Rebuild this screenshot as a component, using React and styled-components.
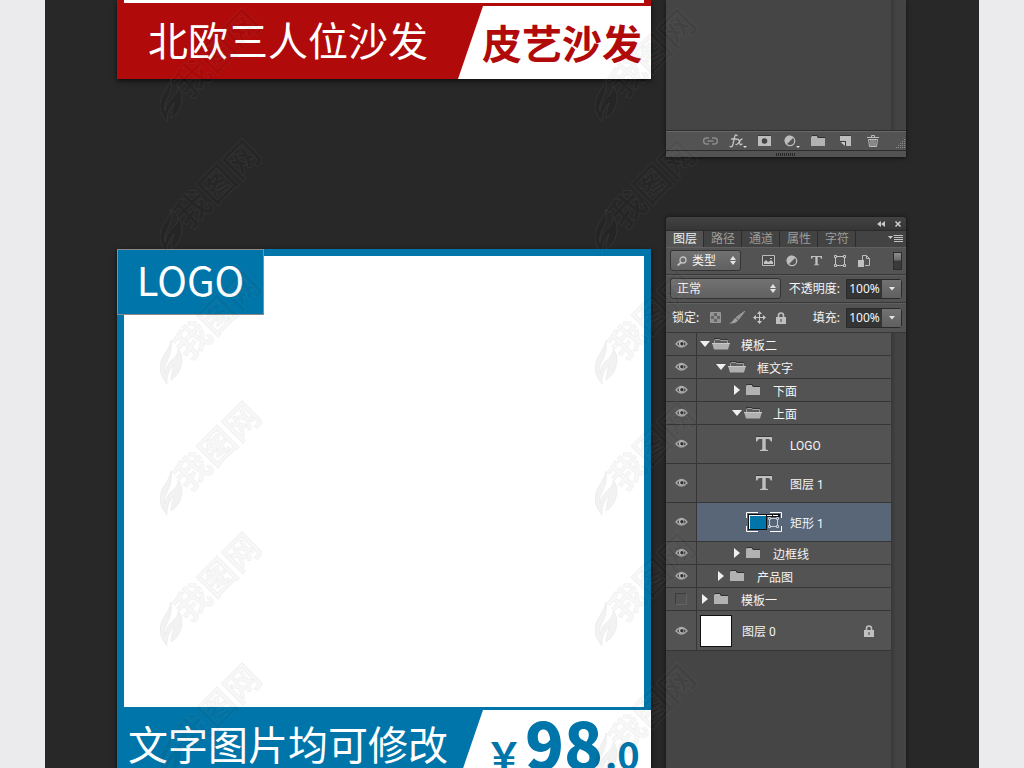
import React, { useState } from "react";
import { createGlobalStyle, styled } from "styled-components";

const LAYERS = [
  { id: 1, kind: "group", level: 0, open: true, name: "模板二", visible: true },
  { id: 2, kind: "group", level: 1, open: true, name: "框文字", visible: true },
  { id: 3, kind: "group", level: 2, open: false, name: "下面", visible: true },
  { id: 4, kind: "group", level: 2, open: true, name: "上面", visible: true },
  { id: 5, kind: "text", name: "LOGO", visible: true },
  { id: 6, kind: "text", name: "图层 1", visible: true },
  { id: 7, kind: "shape", name: "矩形 1", visible: true },
  { id: 8, kind: "group", level: 2, open: false, name: "边框线", visible: true },
  { id: 9, kind: "group", level: 1, open: false, name: "产品图", visible: true },
  { id: 10, kind: "group", level: 0, open: false, name: "模板一", visible: false },
  { id: 11, kind: "background", name: "图层 0", visible: true },
];

const TABS = ["图层", "路径", "通道", "属性", "字符"];

function App() {
  return (
    <>
      <GlobalStyle />
      <St.Page>
        <St.Board>
          <St.Posters>
            <St.Poster $color="#b00a0a">
              <St.Canvas $height="3px" />
              <St.Banner>
                <St.BannerText $indent="31px">北欧三人位沙发</St.BannerText>
                <St.Slant $color="#b00a0a">皮艺沙发</St.Slant>
              </St.Banner>
            </St.Poster>
            <St.Poster $color="#0075a9">
              <St.Logo>LOGO</St.Logo>
              <St.Canvas $height="451px" $top="7px" />
              <St.Banner>
                <St.BannerText $indent="11px">文字图片均可修改</St.BannerText>
                <St.Slant $color="#0075a9">
                  <St.Price>
                    ￥<strong>98</strong>.0
                  </St.Price>
                </St.Slant>
              </St.Banner>
            </St.Poster>
          </St.Posters>
          <St.Panels>
            <PreviousPanel />
            <LayersPanel />
          </St.Panels>
          <St.Watermarks aria-hidden="true">
            {Array.from({ length: 12 }, (_, i) => (
              <Watermark key={i} />
            ))}
          </St.Watermarks>
        </St.Board>
      </St.Page>
    </>
  );
}

export default App;

function PreviousPanel() {
  return (
    <St.ShortPanel>
      <St.ListArea>
        <St.Empty />
        <St.ScrollBar />
      </St.ListArea>
      <St.Footer>
        <St.FooterButton aria-label="link layers">
          <LinkIcon />
        </St.FooterButton>
        <St.FooterButton aria-label="layer style">
          <FxIcon />
        </St.FooterButton>
        <St.FooterButton aria-label="add mask">
          <MaskIcon />
        </St.FooterButton>
        <St.FooterButton aria-label="adjustment layer">
          <AdjustIcon menu />
        </St.FooterButton>
        <St.FooterButton aria-label="new group">
          <FolderIcon />
        </St.FooterButton>
        <St.FooterButton aria-label="new layer">
          <NewLayerIcon />
        </St.FooterButton>
        <St.FooterButton aria-label="delete layer">
          <TrashIcon />
        </St.FooterButton>
        <ResizeIcon />
      </St.Footer>
      <St.Grip>
        <GripIcon />
      </St.Grip>
    </St.ShortPanel>
  );
}

function LayersPanel() {
  const [tab, setTab] = useState("图层");
  const [selected, setSelected] = useState(7);
  const [layers, setLayers] = useState(LAYERS);

  const toggle = (id) => {
    setLayers(layers.map((l) => (l.id === id ? { ...l, visible: !l.visible } : l)));
  };

  return (
    <St.Panel>
      <St.TitleBar>
        <St.IconButton aria-label="collapse">
          <CollapseIcon />
        </St.IconButton>
        <St.IconButton aria-label="close">
          <CloseIcon />
        </St.IconButton>
      </St.TitleBar>
      <St.Tabs>
        {TABS.map((name) => (
          <St.Tab key={name} $active={tab === name} onClick={() => setTab(name)}>
            {name}
          </St.Tab>
        ))}
        <St.MenuButton aria-label="panel menu">
          <MenuIcon />
        </St.MenuButton>
      </St.Tabs>

      <St.ToolRow>
        <St.SelectBox $width="71px">
          <SearchIcon />
          <St.Select aria-label="filter">
            <option>类型</option>
          </St.Select>
          <UpDownIcon />
        </St.SelectBox>
        <St.FilterGroup>
          <St.ToolButton $width="24px" aria-label="pixel layers">
            <PictureIcon />
          </St.ToolButton>
          <St.ToolButton $width="24px" aria-label="adjustment layers">
            <AdjustIcon />
          </St.ToolButton>
          <St.ToolButton $width="24px" aria-label="type layers">
            <TypeIcon size={11} />
          </St.ToolButton>
          <St.ToolButton $width="24px" aria-label="shape layers">
            <ShapeIcon />
          </St.ToolButton>
          <St.ToolButton $width="24px" aria-label="smart objects">
            <SmartIcon />
          </St.ToolButton>
        </St.FilterGroup>
        <St.Switch aria-label="filter on or off" />
      </St.ToolRow>

      <St.ToolRow>
        <St.SelectBox $width="111px">
          <St.Select aria-label="blend mode">
            <option>正常</option>
          </St.Select>
          <UpDownIcon />
        </St.SelectBox>
        <St.Field>
          <St.Label htmlFor="opacity">不透明度:</St.Label>
          <St.ValueBox>
            <St.Value id="opacity" defaultValue="100%" />
            <St.Drop aria-label="opacity slider">
              <DropIcon />
            </St.Drop>
          </St.ValueBox>
        </St.Field>
      </St.ToolRow>

      <St.ToolRow $last>
        <St.LockLabel>锁定:</St.LockLabel>
        <St.ToolButton $width="22px" aria-label="lock transparency">
          <CheckerIcon />
        </St.ToolButton>
        <St.ToolButton $width="22px" aria-label="lock pixels">
          <BrushIcon />
        </St.ToolButton>
        <St.ToolButton $width="22px" aria-label="lock position">
          <MoveIcon />
        </St.ToolButton>
        <St.ToolButton $width="22px" aria-label="lock all">
          <LockIcon />
        </St.ToolButton>
        <St.Field>
          <St.Label htmlFor="fill">填充:</St.Label>
          <St.ValueBox>
            <St.Value id="fill" defaultValue="100%" />
            <St.Drop aria-label="fill slider">
              <DropIcon />
            </St.Drop>
          </St.ValueBox>
        </St.Field>
      </St.ToolRow>

      <St.ListArea>
        <St.Layers>
          {layers.map((layer) => (
            <Layer
              key={layer.id}
              layer={layer}
              selected={selected === layer.id}
              onSelect={() => setSelected(layer.id)}
              onToggle={() => toggle(layer.id)}
            />
          ))}
        </St.Layers>
        <St.ScrollBar />
      </St.ListArea>
    </St.Panel>
  );
}

function Layer({ layer, selected, onSelect, onToggle }) {
  const { kind, level, open, name, visible } = layer;
  return (
    <St.Layer $kind={kind}>
      <St.Eye aria-label={"show " + name} aria-pressed={visible} onClick={onToggle}>
        {visible ? <EyeIcon /> : <St.NoEye />}
      </St.Eye>
      <St.LayerBody $kind={kind} $level={level} $selected={selected} onClick={onSelect}>
        {kind === "group" && (
          <>
            <ArrowIcon open={open} />
            <St.FolderSlot>{open ? <OpenFolderIcon /> : <FolderIcon />}</St.FolderSlot>
          </>
        )}
        {kind === "text" && (
          <St.TypeSlot>
            <TypeIcon size={16} />
          </St.TypeSlot>
        )}
        {kind === "shape" && <ShapeThumb />}
        {kind === "background" && <St.Thumb />}
        <St.LayerName>{name}</St.LayerName>
        {kind === "background" && <LockIcon />}
      </St.LayerBody>
    </St.Layer>
  );
}

function Watermark() {
  return (
    <svg width="104" height="118" viewBox="0 0 104 118">
      <g fill="#000000" fillOpacity="0.05" stroke="#999999" strokeOpacity="0.1">
        <path d="M11 72C9 83 0 88 0 100c0 6 3 11 7 16 0-9 2-14 7-19-2 7-3 11-3 15 7-4 11-12 11-20 0-5-1-8-4-11 0 7-5 9-9 14-2 3-4 6-4 10-3-10 9-15 6-33z" />
        <text
          x="58"
          y="60"
          textAnchor="middle"
          transform="rotate(-45 58 48)"
          fontFamily='"Noto Sans CJK SC", sans-serif'
          fontSize="35"
          fontWeight="700"
        >
          我图网
        </text>
      </g>
    </svg>
  );
}

/* icons */

const EyeIcon = () => (
  <svg width="13" height="10" viewBox="0 0 13 10">
    <path d="M1 5Q6.500-2 12 5 6.500 11 1 5z" fill="#484848" stroke="#a8a8a8" strokeWidth="1.3" />
    <circle cx="6.500" cy="4.700" r="2.600" fill="#c0c0c0" />
    <circle cx="6.900" cy="4.700" r="1.700" fill="#303030" />
  </svg>
);

const ArrowIcon = ({ open }) => (
  <svg width="10" height="10" viewBox="0 0 10 10">
    <path d={open ? "M0 2h10L5 8z" : "M2 0v10l6-5z"} fill="#f0f0f0" />
  </svg>
);

const FolderIcon = () => (
  <svg width="15" height="12" viewBox="0 0 15 12">
    <path d="M0 2l1-1h5l1 2h7v8H0z" fill="#b2b2b2" />
    <path d="M0 1.500l1-1h5l1 2h7" fill="none" stroke="#303030" />
  </svg>
);

const OpenFolderIcon = () => (
  <svg width="18" height="12" viewBox="0 0 18 12">
    <path d="M2.500 5V2.500l1-1h4l1 1h7V5" fill="#5c5c5c" stroke="#a0a0a0" />
    <path d="M2 .5h6l1 1h7" fill="none" stroke="#333" />
    <path d="M0 5h18l-2 6.500H2z" fill="#b0b0b0" />
    <path d="M0 5.500h18" stroke="#c8c8c8" />
  </svg>
);

const TypeIcon = ({ size }) => (
  <svg width={size} height={size} viewBox="0 0 16 16">
    <path
      d="M0 1h16v4.500h-1.200Q14.300 3 12.500 3H9.700v10q0 1 2.300 1v1H4v-1q2.300 0 2.300-1V3H3.500Q1.700 3 1.200 5.500H0z"
      fill="#c0c0c0"
    />
    <path d="M0 .5h16" stroke="#3c3c3c" />
  </svg>
);

const ShapeIcon = () => (
  <svg width="12" height="12" viewBox="0 0 12 12" fill="#555" stroke="#c4c4c4">
    <path d="M1.500 1.500h9v9h-9z" fill="none" />
    <path d="M.5.500h2v2h-2zM9.500.500h2v2h-2zM.5 9.500h2v2h-2zM9.500 9.500h2v2h-2z" />
  </svg>
);

const ShapeThumb = () => (
  <svg width="36" height="20" viewBox="0 0 36 20" fill="none">
    <path
      d="M.500 6V.500H12M24 .500h11.500V6M35.500 14v5.500H24M12 19.500H.500V14"
      stroke="#fff"
    />
    <path d="M2 2h32v3H2z" fill="#111" />
    <path d="M3 3.500h30" stroke="#fff" strokeDasharray="5 1" />
    <path d="M2 2h19v16H2z" fill="#111" />
    <path d="M3 3h17v1H3zM3 4h1v13H3z" fill="#f4f4f4" />
    <path d="M4 4h16v13H4z" fill="#0075a9" />
    <g fill="#596678" stroke="#c4ccd6">
      <path d="M23.500 6.500h8v8h-8z" />
      <path d="M22.500 5.500h2v2h-2zM30.500 5.500h2v2h-2zM22.500 13.500h2v2h-2zM30.500 13.500h2v2h-2z" />
    </g>
  </svg>
);

const LockIcon = () => (
  <svg width="10" height="12" viewBox="0 0 10 12">
    <path d="M2.500 6V3.500a2.500 2.500 0 0 1 5 0V6" fill="none" stroke="#c0c0c0" strokeWidth="1.600" />
    <path d="M0 5h10v7H0z" fill="#c0c0c0" />
    <path d="M4.500 7h1v3h-1z" fill="#444" />
  </svg>
);

const LinkIcon = () => (
  <svg width="15" height="8" viewBox="0 0 15 8" fill="none" stroke="#8a8a8a" strokeWidth="1.600">
    <path d="M6 1H3.500a3 3 0 0 0 0 6H6M9 1h2.500a3 3 0 0 1 0 6H9M4.500 4h6" />
  </svg>
);

const FxIcon = () => (
  <svg width="18" height="14" viewBox="0 0 18 14" fill="none" stroke="#c4c4c4" strokeLinecap="round">
    <path d="M8 1.500C6-.5 5.500 3 4.800 6.500S3.500 14 1 12.500M2.500 5h4.500" strokeWidth="1.300" />
    <path d="M7.500 5.500c2-1 2.500 0 3 3s1 3 2.500 1.500M13 5c-2 0-3.500 6.500-6 5.500" strokeWidth="1.300" />
    <path d="M14 12h4l-2 2z" fill="#ddd" stroke="none" />
  </svg>
);

const MaskIcon = () => (
  <svg width="13" height="11" viewBox="0 0 13 11">
    <path d="M0 0h13v11H0z" fill="#bcbcbc" />
    <path d="M0 .5h13" stroke="#383838" />
    <circle cx="6.500" cy="6" r="2.800" fill="#444" />
  </svg>
);

const AdjustIcon = ({ menu }) => (
  <svg width={menu ? 16 : 12} height={menu ? 14 : 12} viewBox={menu ? "0 -1 16 14" : "0 0 12 12"}>
    <circle cx="6" cy="6" r="4.700" fill="#555" stroke="#bdbdbd" strokeWidth="1.300" />
    <path d="M9.500 2.500A5 5 0 1 0 2.500 9.500z" fill="#bdbdbd" />
    {menu && <path d="M12 11h4l-2 2z" fill="#ddd" />}
  </svg>
);

const NewLayerIcon = () => (
  <svg width="11" height="11" viewBox="0 0 11 11">
    <path d="M0 1h11v10H6V6H0z" fill="#bcbcbc" />
    <path d="M0 .5h11" stroke="#383838" />
    <path d="M0 6.500L5 11V6.500z" fill="#c8c8c8" />
    <path d="M0 6.500h5.500V11" fill="none" stroke="#383838" />
  </svg>
);

const TrashIcon = () => (
  <svg width="12" height="12" viewBox="0 0 12 12" fill="none" stroke="#bcbcbc">
    <path d="M0 2.500h12M4.500 2V.500h3V2" />
    <path d="M1.500 4.500l1 7h7l1-7z" />
    <path d="M4 5v6M6 5v6M8 5v6" />
  </svg>
);

const ResizeIcon = () => (
  <svg width="11" height="11" viewBox="0 0 11 11" stroke="#8c8c8c" strokeDasharray="1 1">
    <path d="M9 .500h1M7 2.500h4M5 4.500h6M3 6.500h8M1 8.500h10" />
  </svg>
);

const GripIcon = () => (
  <svg width="20" height="3" viewBox="0 0 20 3">
    <path d="M0 1.500h20" stroke="#262626" strokeWidth="3" strokeDasharray="1 1" />
  </svg>
);

const CollapseIcon = () => (
  <svg width="8" height="6" viewBox="0 0 8 6">
    <path d="M4 0v6L0 3zM8 0v6L4 3z" fill="#c8c8c8" />
  </svg>
);

const CloseIcon = () => (
  <svg width="6" height="6" viewBox="0 0 6 6">
    <path d="M.500.500l5 5M5.500.500l-5 5" stroke="#d0d0d0" strokeWidth="1.500" />
  </svg>
);

const MenuIcon = () => (
  <svg width="15" height="8" viewBox="0 0 15 8">
    <path d="M0 1h5L2.500 4z" fill="#c8c8c8" />
    <path d="M5.500 .500H15M6 2.500h9M6 4.500h9M6 6.500h9" stroke="#c0c0c0" />
  </svg>
);

const SearchIcon = () => (
  <svg width="10" height="10" viewBox="0 0 10 10" fill="none" stroke="#c4c4c4">
    <circle cx="6" cy="4" r="3" strokeWidth="1.300" />
    <path d="M4 6.500L.700 9.500" strokeWidth="1.800" />
  </svg>
);

const UpDownIcon = () => (
  <svg width="6" height="9" viewBox="0 0 6 9">
    <path d="M0 4l3-4 3 4zM0 5h6L3 9z" fill="#e4e4e4" />
  </svg>
);

const DropIcon = () => (
  <svg width="6" height="4" viewBox="0 0 6 4">
    <path d="M0 0h6L3 3.500z" fill="#e4e4e4" />
  </svg>
);

const PictureIcon = () => (
  <svg width="13" height="11" viewBox="0 0 13 11">
    <path d="M.500.500h12v10H.500z" fill="#4c4c4c" stroke="#bcbcbc" />
    <path d="M2 9V7l2-2 2 2 2-1 1-1 2 2v2z" fill="#c4c4c4" />
    <path d="M8 3h2v1H8z" fill="#c4c4c4" />
  </svg>
);

const SmartIcon = () => (
  <svg width="12" height="12" viewBox="0 0 12 12">
    <path d="M4.500 5V.500h4l3 3v7H7" fill="none" stroke="#bcbcbc" />
    <path d="M8.500.500v3h3" fill="none" stroke="#bcbcbc" />
    <path d="M0 5h6v7H0z" fill="#c0c0c0" />
  </svg>
);

const CheckerIcon = () => (
  <svg width="11" height="11" viewBox="0 0 11 11">
    <path d="M.500.500h10v10H.500z" fill="#666" stroke="#999" />
    <path d="M1 1h3v3H1zM7 1h3v3H7zM4 4h3v3H4zM1 7h3v3H1zM7 7h3v3H7z" fill="#929292" />
  </svg>
);

const BrushIcon = () => (
  <svg width="16" height="13" viewBox="0 0 16 13">
    <path d="M16 0L9.500 8.500 7 6.500z" fill="#989898" stroke="#989898" />
    <path d="M6.500 7L9 9.500Q7 13 0 12.500 3 11.500 4 9.500 5 7 6.500 7z" fill="#a0a0a0" />
  </svg>
);

const MoveIcon = () => (
  <svg width="13" height="13" viewBox="0 0 13 13" fill="#c8c8c8">
    <path d="M6 2h1v9H6zM2 6h9v1H2z" />
    <path d="M6.500 0L9 3H4zM6.500 13L4 10h5zM0 6.500L3 4v5zM13 6.500L10 9V4z" />
  </svg>
);

const GlobalStyle = createGlobalStyle`
  * {
    box-sizing: border-box;
  }
  body {
    margin: 0;
    font-family: "Noto Sans", "Noto Sans CJK SC", sans-serif;
    font-size: 12px;
  }
  button, input, select {
    margin: 0;
    padding: 0;
    border: 0;
    background: none;
    color: inherit;
    font: inherit;
  }
  svg {
    display: block;
    flex-shrink: 0;
  }
`;

const St = {
  Page: styled.main`
    height: 100vh;
    padding: 0 45px;
    overflow: hidden;
    background-color: #ebebed;
  `,
  Board: styled.div`
    position: relative;
    display: grid;
    grid-template-columns: 1fr 240px;
    gap: 15px;
    height: 100%;
    padding: 0 73px 0 72px;
    overflow: hidden;
    background-color: #282828;
  `,

  Posters: styled.section`
    display: flex;
    flex-direction: column;
    gap: 170px;
    height: 0;
  `,
  Poster: styled.article`
    position: relative;
    flex-shrink: 0;
    background-color: ${(props) => props.$color};
    box-shadow: 0 2px 5px rgba(0, 0, 0, 0.7);
  `,
  Canvas: styled.div`
    height: ${(props) => props.$height};
    margin: 0 7px;
    border-top: ${(props) => props.$top || 0} solid transparent;
    background: #ffffff padding-box;
    box-sizing: content-box;
  `,
  Banner: styled.div`
    display: flex;
    justify-content: space-between;
    height: 76px;
    padding-top: 3px;
    font-family: "Noto Sans CJK SC", sans-serif;
    font-size: 40px;
    line-height: 66px;
    white-space: nowrap;
  `,
  BannerText: styled.h2`
    margin: 0;
    padding-left: ${(props) => props.$indent};
    font-size: 40px;
    font-weight: 400;
    color: #ffffff;
  `,
  Slant: styled.div`
    width: 193px;
    padding: 3px 9px 0 24px;
    background-color: #ffffff;
    clip-path: polygon(25px 0, 100% 0, 100% 100%, 0 100%);
    color: ${(props) => props.$color};
    font-weight: 700;
  `,
  Price: styled.span`
    display: block;
    padding-left: 3px;
    font-size: 38px;
    line-height: 58px;

    strong {
      padding: 0 2px;
      font-size: 64px;
    }
  `,
  Logo: styled.div`
    position: absolute;
    top: 0;
    left: 0;
    width: 147px;
    height: 66px;
    border: 1px solid #8b8a8d;
    background-color: #0075a9;
    color: #ffffff;
    font-family: "Noto Sans CJK SC", sans-serif;
    font-size: 40px;
    line-height: 58px;
    text-align: center;
  `,

  Panels: styled.aside`
    display: flex;
    flex-direction: column;
    gap: 60px;
    min-height: 0;
    color: #f4f4f4;
  `,
  ShortPanel: styled.section`
    display: flex;
    flex-direction: column;
    flex-shrink: 0;
    height: 157px;
    background-color: #535353;
    box-shadow: 0 1px 4px rgba(0, 0, 0, 0.6);
  `,
  Panel: styled.section`
    display: flex;
    flex-direction: column;
    flex: 1;
    border-radius: 4px 4px 0 0;
    background-color: #535353;
    box-shadow: 0 0 4px rgba(0, 0, 0, 0.6);
  `,
  ListArea: styled.div`
    display: flex;
    flex: 1;
    background-color: #454545;
  `,
  Empty: styled.div`
    flex: 1;
  `,
  ScrollBar: styled.div`
    width: 15px;
    background: linear-gradient(to right, #383838, #434343 5px, #454545);
  `,
  Footer: styled.div`
    display: flex;
    align-items: center;
    justify-content: flex-end;
    height: 20px;
    border-top: 1px solid #2e2e2e;
    box-shadow: inset 0 1px #686868;

    > svg {
      margin-left: 9px;
      align-self: flex-end;
    }
  `,
  FooterButton: styled.button`
    display: flex;
    justify-content: center;
    width: 27px;
  `,
  Grip: styled.div`
    display: flex;
    justify-content: center;
    height: 7px;
    padding-top: 2px;
    border-top: 1px solid #2e2e2e;
  `,

  TitleBar: styled.header`
    display: flex;
    align-items: center;
    justify-content: flex-end;
    gap: 10px;
    height: 14px;
    padding-right: 5px;
    border-radius: 4px 4px 0 0;
    border-bottom: 1px solid #2a2a2a;
    background: linear-gradient(#424242, #363636);
  `,
  IconButton: styled.button`
    display: block;
  `,
  Tabs: styled.nav`
    display: flex;
    height: 16px;
    background-color: #434343;
  `,
  Tab: styled.button`
    width: 38px;
    height: 16px;
    padding-left: 1px;
    border-right: 1px solid #2c2c2c;
    background-color: ${(props) => (props.$active ? "#535353" : "#434343")};
    color: ${(props) => (props.$active ? "#f0f0f0" : "#9c9c9c")};
    font-size: 12px;
    line-height: 16px;
  `,
  MenuButton: styled.button`
    margin-left: auto;
    padding-right: 3px;
  `,
  ToolRow: styled.div`
    display: flex;
    align-items: center;
    height: ${(props) => (props.$last ? "30px" : "28px")};
    padding: 0 4px;
    border-bottom: 1px solid #383838;
    box-shadow: inset 0 1px #606060;
  `,
  SelectBox: styled.div`
    display: flex;
    align-items: center;
    gap: 5px;
    width: ${(props) => props.$width};
    height: 21px;
    padding: 0 4px 0 6px;
    border: 1px solid #333333;
    border-radius: 3px;
    background: linear-gradient(#727272, #606060);
  `,
  Select: styled.select`
    flex: 1;
    min-width: 0;
    appearance: none;
    outline: none;
    line-height: 18px;
  `,
  FilterGroup: styled.div`
    display: flex;
    margin-left: 15px;
  `,
  ToolButton: styled.button`
    display: flex;
    align-items: center;
    justify-content: center;
    width: ${(props) => props.$width};
    height: 20px;
  `,
  Switch: styled.button`
    width: 9px;
    height: 18px;
    margin-left: auto;
    border: 1px solid #2c2c2c;
    background: linear-gradient(#8c8c8c, #6c6c6c 7px, #3a3a3a 8px);
  `,
  Field: styled.div`
    display: flex;
    align-items: center;
    gap: 6px;
    margin-left: auto;
  `,
  Label: styled.label`
    padding-bottom: 2px;
  `,
  ValueBox: styled.div`
    display: flex;
    width: 56px;
    height: 20px;
    border: 1px solid #2a2a2a;
    border-radius: 0 3px 3px 0;
  `,
  Value: styled.input`
    width: 35px;
    background-color: #343434;
    text-align: center;
    outline: none;
  `,
  Drop: styled.button`
    display: flex;
    flex: 1;
    align-items: center;
    justify-content: center;
    background: linear-gradient(#727272, #606060);
  `,
  LockLabel: styled.span`
    width: 34px;
    padding: 0 0 2px 2px;
  `,

  Layers: styled.ul`
    flex: 1;
    margin: 0;
    padding: 0;
    list-style: none;
  `,
  Layer: styled.li`
    display: flex;
    height: ${(props) =>
      ({ group: "23px", text: "39px", shape: "39px", background: "40px" })[props.$kind]};
    border-bottom: 1px solid #363636;
    background-color: #535353;
  `,
  Eye: styled.button`
    display: flex;
    align-items: center;
    justify-content: center;
    width: 31px;
    border-right: 1px solid #363636;
  `,
  NoEye: styled.span`
    width: 12px;
    height: 12px;
    border: 1px solid #3c3c3c;
    border-right-color: #626262;
    border-bottom-color: #626262;
  `,
  LayerBody: styled.div`
    display: flex;
    align-items: center;
    flex: 1;
    padding-right: 17px;
    padding-left: ${(props) => {
      if (props.$kind === "group") return 3 + props.$level * 16 + "px";
      return props.$kind === "background" ? "3px" : "49px";
    }};
    background-color: ${(props) => (props.$selected ? "#596678" : "transparent")};
  `,
  FolderSlot: styled.span`
    display: flex;
    justify-content: center;
    width: 18px;
    margin: 0 3px 0 2px;
  `,
  TypeSlot: styled.span`
    display: flex;
    justify-content: center;
    width: 36px;
  `,
  Thumb: styled.span`
    width: 32px;
    height: 32px;
    margin-right: 2px;
    border: 1px solid #111111;
    background-color: #ffffff;
  `,
  LayerName: styled.span`
    flex: 1;
    padding: 3px 0 0 8px;
    font-family: Roboto, "Noto Sans CJK SC", sans-serif;
    line-height: 18px;
  `,

  Watermarks: styled.div`
    position: absolute;
    top: 6px;
    left: 115px;
    display: grid;
    grid-template-columns: 435px 104px;
    grid-auto-rows: 131px;
    pointer-events: none;
  `,
};
